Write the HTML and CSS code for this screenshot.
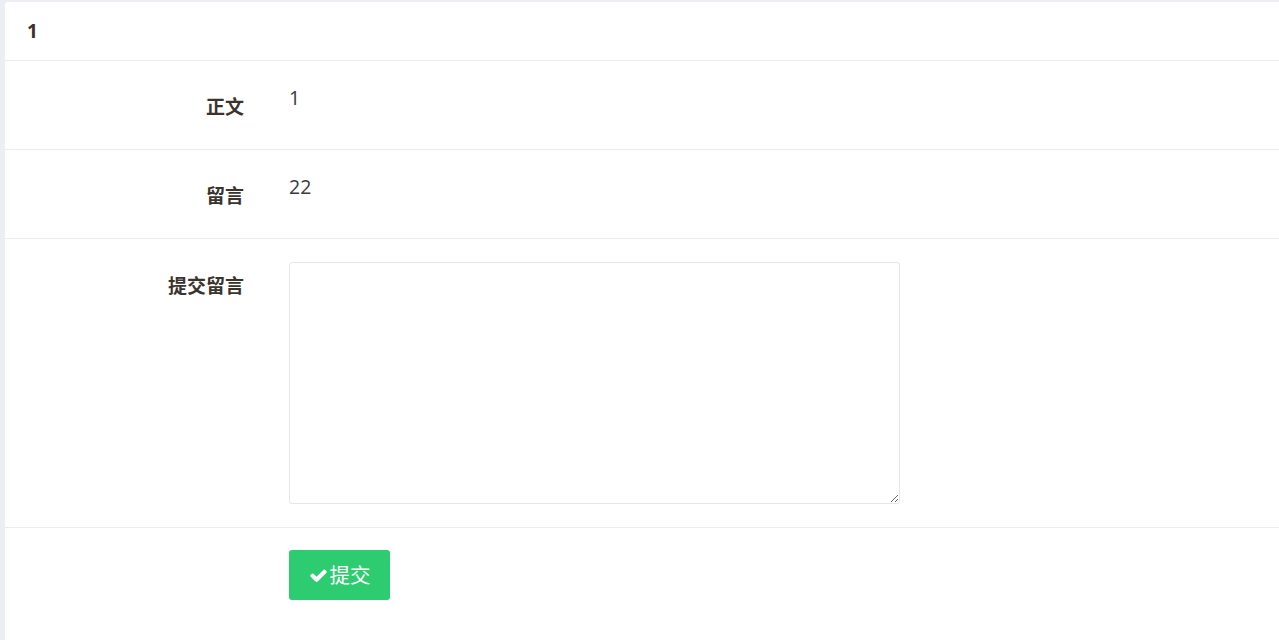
FILE: index.html
```html
<!DOCTYPE html>
<html lang="zh-CN">
<head>
<meta charset="utf-8">
<title>留言</title>
<link rel="stylesheet" href="styles.css">
</head>
<body>
<div class="card">
  <div class="card-header">1</div>
  <form class="form">
    <div class="row">
      <div class="label">正文</div>
      <div class="value">1</div>
    </div>
    <div class="row">
      <div class="label">留言</div>
      <div class="value">22</div>
    </div>
    <div class="row row-tall">
      <div class="label">提交留言</div>
      <div class="value"><textarea class="input"></textarea></div>
    </div>
    <div class="row row-actions">
      <div class="label"></div>
      <div class="value">
        <button type="button" class="btn"><svg class="icon" viewBox="0 0 1792 1792" width="19" height="19"><path fill="#fff" d="M1671 566q0 40-28 68l-724 724-136 136q-28 28-68 28t-68-28l-136-136-362-362q-28-28-28-68t28-68l136-136q28-28 68-28t68 28l294 295 656-657q28-28 68-28t68 28l136 136q28 28 28 68z"/></svg>提交</button>
      </div>
    </div>
  </form>
</div>
</body>
</html>
```
FILE: styles.css
```css
html, body {
  margin: 0;
  padding: 0;
  background: #ebeef2;
  height: 100%;
  overflow: hidden;
}
body {
  font-family: "Open Sans", "Noto Sans CJK SC", sans-serif;
  color: #333;
  padding: 2px 0 0 5px;
  box-sizing: border-box;
}
.card {
  background: #fff;
  border-radius: 3px 0 0 0;
  height: 100%;
}
.card-header {
  height: 58px;
  line-height: 58px;
  padding: 0 22px;
  font-size: 19px;
  font-weight: 700;
  color: #3d3229;
  border-bottom: 1px solid #e9ecf0;
}
.row {
  display: grid;
  grid-template-columns: 239px 1fr;
  column-gap: 45px;
  padding: 22px 0 23px;
  min-height: 43px;
  border-bottom: 1px solid #eaecf2;
}
.row-tall {
  padding: 23px 0 23px;
}
.row-actions {
  border-bottom: none;
}
.label {
  text-align: right;
  font-size: 19px;
  font-weight: 700;
  line-height: 29px;
  padding-top: 10px;
  color: #3a332e;
}
.value {
  font-size: 19.5px;
  line-height: 29px;
  color: #3a3a3a;
}
.input {
  display: block;
  box-sizing: border-box;
  width: 611px;
  height: 242px;
  border: 1px solid #e6e6e6;
  border-radius: 3px;
  font-family: inherit;
  font-size: 16px;
  margin: 0;
  padding: 6px 10px;
}
.btn {
  display: flex;
  align-items: center;
  justify-content: center;
  gap: 2px;
  width: 101px;
  height: 50px;
  border: none;
  border-radius: 3px;
  background: #2ecc71;
  color: #fff;
  font-family: "Open Sans", "Noto Sans CJK SC", sans-serif;
  font-size: 20.5px;
  padding: 0 0 2px;
  cursor: pointer;
}
.icon {
  display: block;
  margin-top: 2px;
}
```
